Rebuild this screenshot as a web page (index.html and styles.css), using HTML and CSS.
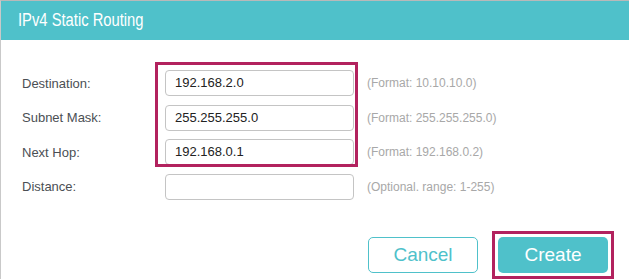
FILE: index.html
```html
<!DOCTYPE html>
<html lang="en">
<head>
  <meta charset="UTF-8">
  <title>IPv4 Static Routing</title>
  <link rel="stylesheet" href="styles.css">
</head>
<body>
  <div class="dialog">
    <div class="dialog-head"><span class="dialog-title">IPv4 Static Routing</span></div>

    <div class="form">
      <div class="mark mark-fields"></div>

      <label class="label">Destination:</label>
      <div class="field">192.168.2.0</div>
      <span class="hint">(Format: 10.10.10.0)</span>

      <label class="label">Subnet Mask:</label>
      <div class="field">255.255.255.0</div>
      <span class="hint">(Format: 255.255.255.0)</span>

      <label class="label">Next Hop:</label>
      <div class="field">192.168.0.1</div>
      <span class="hint">(Format: 192.168.0.2)</span>

      <label class="label">Distance:</label>
      <div class="field"></div>
      <span class="hint">(Optional. range: 1-255)</span>
    </div>

    <div class="actions">
      <button class="btn btn-cancel">Cancel</button>
      <div class="mark-btn">
        <button class="btn btn-create">Create</button>
      </div>
    </div>
  </div>
</body>
</html>
```

FILE: styles.css
```css
body {
  margin: 0;
  font-family: "Liberation Sans", Arial, sans-serif;
  background: #fff;
  width: 629px;
  height: 279px;
  overflow: hidden;
}
.dialog {
  border-top: 1px solid #b9b9b9;
  border-left: 1px solid #c9c9c9;
  height: 278px;
}
.dialog-head {
  height: 39px;
  line-height: 39px;
  background: #4fc1ca;
  color: #fff;
  padding-left: 17px;
}
.dialog-title {
  display: inline-block;
  font-size: 18px;
  transform: scaleX(0.82);
  transform-origin: left center;
}
.form {
  position: relative;
  display: grid;
  grid-template-columns: 143px 189px auto;
  grid-auto-rows: 26px;
  row-gap: 8.5px;
  align-items: center;
  padding: 30px 0 0 21px;
}
.label {
  font-size: 13px;
  color: #4b4f54;
}
.field {
  height: 24px;
  line-height: 24px;
  border: 1px solid #c4c4c4;
  border-radius: 4px;
  padding-left: 9px;
  font-size: 13px;
  color: #222;
}
.hint {
  font-size: 12px;
  color: #a8a8a8;
  margin-left: 13px;
}
.mark {
  position: absolute;
  border: 3px solid #b2225e;
}
.mark-fields {
  left: 154px;
  top: 22px;
  width: 197px;
  height: 99px;
}
.actions {
  display: flex;
  justify-content: flex-end;
  align-items: center;
  gap: 14px;
  padding: 31px 15px 0 0;
}
.mark-btn {
  border: 3px solid #b2225e;
  padding: 3px;
}
.btn {
  width: 110px;
  height: 36px;
  border-radius: 5px;
  font-family: "Liberation Sans", Arial, sans-serif;
  font-size: 19px;
  cursor: pointer;
}
.btn-cancel {
  background: #fff;
  border: 1px solid #4fc1ca;
  color: #4fc1ca;
}
.btn-create {
  display: block;
  background: #4fc1ca;
  border: none;
  color: #fff;
}
```
